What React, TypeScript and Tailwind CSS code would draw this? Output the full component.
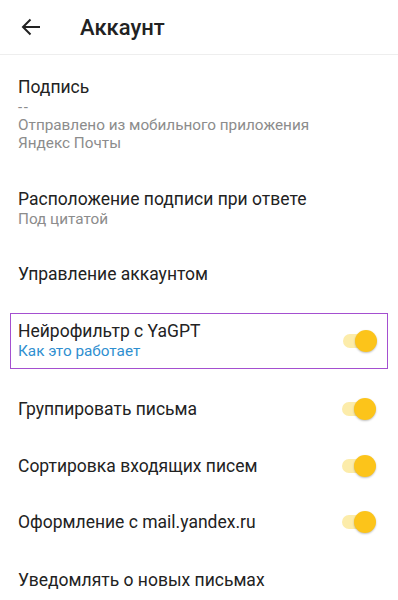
import React from "react";

function Toggle() {
  return (
    <div className="relative h-[22px] w-[36px] shrink-0">
      <div className="absolute left-[2px] top-[4px] h-[14px] w-[30px] rounded-full bg-[#fcecaa]" />
      <div className="absolute right-0 top-0 h-[22px] w-[22px] rounded-full bg-[#fcc41a] shadow-[0_1px_2px_rgba(0,0,0,0.25)]" />
    </div>
  );
}

function SwitchRow({ title, h }: { title: string; h: string }) {
  return (
    <div className={`flex items-center justify-between pl-[18px] pr-[22px] ${h}`}>
      <span className="text-[17.5px] leading-[22px] text-[#222]">{title}</span>
      <Toggle />
    </div>
  );
}

export default function App() {
  return (
    <div
      className="min-h-[600px] w-[398px] bg-white overflow-hidden"
      style={{ fontFamily: "Roboto, 'Noto Sans', sans-serif" }}
    >
      <div className="flex h-[55px] items-center border-b border-[#eeeeee]">
        <div className="flex w-[80px] items-center pl-[21px]">
          <svg width="20" height="18" viewBox="0 0 20 18" fill="none">
            <path d="M19 9H2M9.5 1.5L2 9l7.5 7.5" stroke="#222" strokeWidth="2" />
          </svg>
        </div>
        <span className="text-[22px] font-medium text-[#222]">Аккаунт</span>
      </div>

      <div className="flex h-[120px] flex-col px-[18px] pt-[21px]">
        <span className="text-[17.5px] leading-[22px] text-[#222]">Подпись</span>
        <span className="text-[15px] leading-[18px] tracking-[1.5px] text-[#8c8c8c]">--</span>
        <span className="text-[15.3px] leading-[18px] text-[#8c8c8c]">Отправлено из мобильного приложения</span>
        <span className="text-[15.3px] leading-[18px] text-[#8c8c8c]">Яндекс Почты</span>
      </div>

      <div className="flex h-[68px] flex-col px-[18px] pt-[13px]">
        <span className="text-[17.5px] leading-[22px] text-[#222]">Расположение подписи при ответе</span>
        <span className="text-[15.3px] leading-[18px] text-[#8c8c8c]">Под цитатой</span>
      </div>

      <div className="flex h-[62px] items-center px-[18px]">
        <span className="text-[17.5px] leading-[22px] text-[#222]">Управление аккаунтом</span>
      </div>

      <div className="h-[76px] px-[10px] pt-[8px]">
        <div className="flex h-[56px] items-center justify-between border-[1.5px] border-[#a44fd0] pl-[7px] pr-[10px]">
          <div className="flex flex-col">
            <span className="text-[17.5px] leading-[21px] text-[#222]">Нейрофильтр с YaGPT</span>
            <span className="text-[15.3px] leading-[19px] text-[#2f8fd0]">Как это работает</span>
          </div>
          <Toggle />
        </div>
      </div>

      <SwitchRow title="Группировать письма" h="h-[56px]" />
      <SwitchRow title="Сортировка входящих писем" h="h-[57px]" />
      <SwitchRow title="Оформление с mail.yandex.ru" h="h-[56px]" />

      <div className="flex h-[60px] items-center px-[18px]">
        <span className="text-[17.5px] leading-[22px] text-[#222]">Уведомлять о новых письмах</span>
      </div>
    </div>
  );
}
